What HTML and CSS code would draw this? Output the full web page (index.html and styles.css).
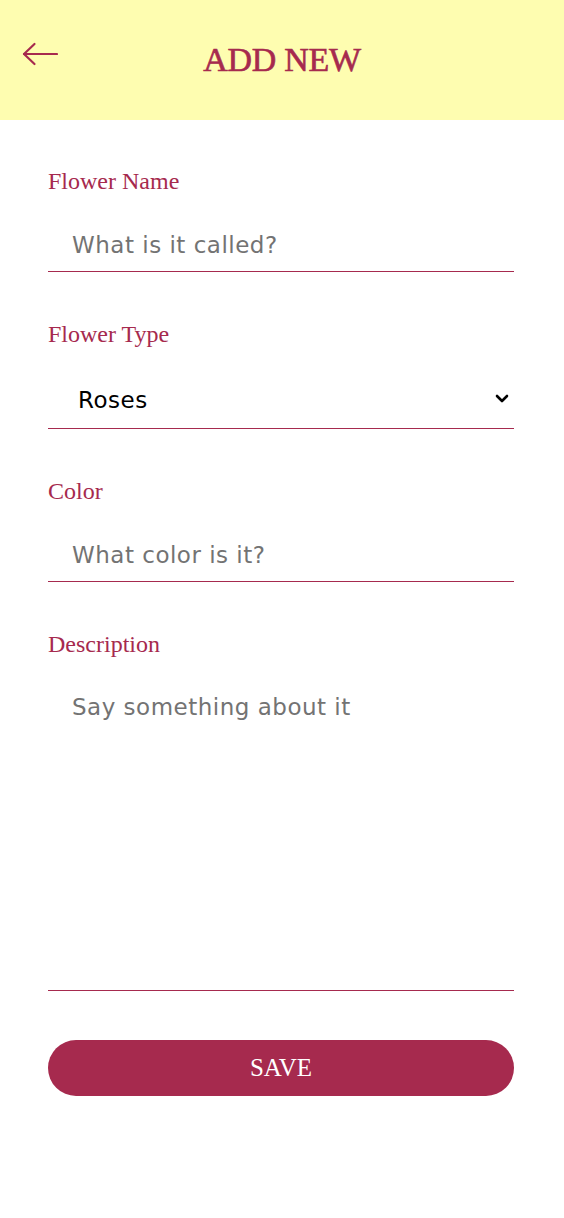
FILE: index.html
```html
<!DOCTYPE html>
<html lang="en">
<head>
<meta charset="utf-8">
<title>Add New</title>
<link rel="stylesheet" href="styles.css">
</head>
<body>
<header class="topbar">
  <button class="back" aria-label="Back">
    <svg width="36" height="24" viewBox="0 0 36 24" fill="none" stroke="currentColor" stroke-width="2.2" stroke-linecap="round" stroke-linejoin="round">
      <path d="M2 12 H35"/>
      <path d="M12.5 2 L2 12 L12.5 22"/>
    </svg>
  </button>
  <h1 class="title">ADD NEW</h1>
</header>
<main class="form">
  <div class="field">
    <label class="label" for="name">Flower Name</label>
    <div class="line">
      <input class="input" id="name" type="text" placeholder="What is it called?">
    </div>
  </div>
  <div class="field">
    <label class="label" for="type">Flower Type</label>
    <div class="line select-wrap">
      <select class="select" id="type">
        <option>Roses</option>
        <option>Tulips</option>
        <option>Lilies</option>
      </select>
      <svg class="chev" width="14" height="9" viewBox="0 0 14 9" fill="none" stroke="#000" stroke-width="2.6" stroke-linecap="round" stroke-linejoin="round">
        <path d="M2 2 L7 7 L12 2"/>
      </svg>
    </div>
  </div>
  <div class="field">
    <label class="label" for="color">Color</label>
    <div class="line">
      <input class="input" id="color" type="text" placeholder="What color is it?">
    </div>
  </div>
  <div class="field">
    <label class="label" for="desc">Description</label>
    <div class="line">
      <textarea class="textarea" id="desc" placeholder="Say something about it"></textarea>
    </div>
  </div>
  <button class="save">SAVE</button>
</main>
</body>
</html>
```
FILE: styles.css
```css
* { box-sizing: border-box; }
html, body { margin: 0; padding: 0; background: #fff; }
body { font-family: "Liberation Serif", serif; color: #a62a4e; }

.topbar {
  height: 120px;
  background: #fefdb0;
  display: flex;
  align-items: center;
  position: relative;
  justify-content: center;
}
.back {
  position: absolute;
  left: 22px;
  top: 42px;
  padding: 0;
  border: 0;
  background: none;
  color: #a62a4e;
  line-height: 0;
  cursor: pointer;
}
.title {
  margin: 0;
  font-size: 34px;
  font-weight: 400;
  -webkit-text-stroke: 0.6px #a62a4e;
  letter-spacing: -0.3px;
  color: #a62a4e;
}

.form {
  padding: 47px 50px 0 48px;
  display: flex;
  flex-direction: column;
  gap: 48px;
}
.field { display: flex; flex-direction: column; gap: 21px; }
.label {
  font-size: 24px;
  line-height: 28px;
  color: #a62a4e;
}
.line {
  border-bottom: 1px solid #a62a4e;
  display: flex;
}
.input, .select, .textarea {
  font-family: "DejaVu Sans", "Open Sans", sans-serif;
  font-size: 23px;
  letter-spacing: 0.5px;
  color: #000;
  border: 0;
  outline: none;
  background: transparent;
  flex: 1;
  min-width: 0;
}
.input {
  height: 55px;
  padding: 2px 24px 0 24px;
}
.input::placeholder, .textarea::placeholder { color: #737373; opacity: 1; }
.select-wrap {
  height: 60px;
  align-items: center;
}
.select {
  height: 100%;
  padding: 2px 0 0 30px;
  appearance: none;
  -webkit-appearance: none;
}
.chev { margin-right: 5px; }
.textarea {
  height: 311px;
  padding: 14px 24px;
  line-height: 28px;
  resize: none;
}
.save {
  margin-top: 1px;
  height: 56px;
  border: 0;
  border-radius: 28px;
  background: #a62a4e;
  color: #fff;
  font-family: "Liberation Serif", serif;
  font-size: 25px;
  cursor: pointer;
}
```
